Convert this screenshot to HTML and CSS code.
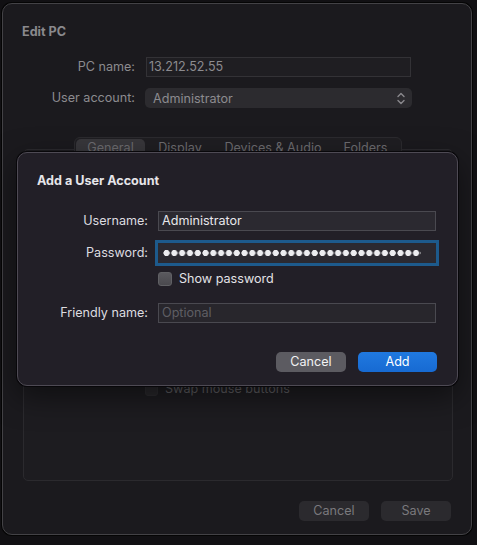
FILE: index.html
```html
<!DOCTYPE html>
<html lang="en">
<head>
<meta charset="utf-8">
<title>Edit PC</title>
<link rel="stylesheet" href="styles.css">
</head>
<body>
<div class="window">
  <div class="win-title">Edit PC</div>
  <div class="form">
    <label class="lbl">PC name:</label>
    <div class="field dim">13.212.52.55</div>
    <label class="lbl">User account:</label>
    <div class="popup">
      <span>Administrator</span>
      <svg class="chev" width="8" height="13" viewBox="0 0 8 13"><path d="M1 4.5 L4 1.5 L7 4.5 M1 8.5 L4 11.5 L7 8.5" fill="none" stroke="#8a898d" stroke-width="1.4" stroke-linecap="round" stroke-linejoin="round"/></svg>
    </div>
  </div>
  <div class="tabs">
    <div class="tab active">General</div>
    <div class="tab">Display</div>
    <div class="tab">Devices &amp; Audio</div>
    <div class="tab">Folders</div>
  </div>
  <div class="group">
    <div class="check-row">
      <span class="box dimbox"></span>
      <span class="dimtext">Swap mouse buttons</span>
    </div>
  </div>
  <div class="actions">
    <div class="btn dimbtn">Cancel</div>
    <div class="btn dimbtn">Save</div>
  </div>
</div>

<div class="sheet">
  <div class="sheet-title">Add a User Account</div>
  <div class="sheet-form">
    <label class="slbl">Username:</label>
    <div class="sfield">Administrator</div>
    <label class="slbl pw">Password:</label>
    <div class="sfield focus"><div class="dots"></div></div>
    <div></div>
    <div class="check-row show">
      <span class="box"></span>
      <span>Show password</span>
    </div>
    <label class="slbl friendly">Friendly name:</label>
    <div class="sfield placeholder friendly">Optional</div>
  </div>
  <div class="sheet-actions">
    <div class="btn cancel">Cancel</div>
    <div class="btn add">Add</div>
  </div>
</div>
</body>
</html>
```

FILE: styles.css
```css
html, body {
  margin: 0;
  padding: 0;
}
body {
  background: #111013;
  font-family: Inter, "Liberation Sans", sans-serif;
  font-size: 12.6px;
  width: 477px;
  height: 545px;
  position: relative;
  overflow: hidden;
  padding: 3px 0 0 2px;
  box-sizing: border-box;
}
.window {
  width: 470px;
  height: 532px;
  box-sizing: border-box;
  border: 1px solid #434246;
  border-radius: 10px;
  box-shadow: 0 0 0 1px #050505;
  background: #1b1a1e;
  display: flex;
  flex-direction: column;
  padding: 0 20px 0 19px;
}
.win-title {
  margin-top: 20px;
  line-height: 16px;
  font-weight: 700;
  color: #8a898d;
}
.form {
  margin-top: 17px;
  display: grid;
  grid-template-columns: 113px 265px;
  column-gap: 11px;
  row-gap: 11px;
  align-items: center;
}
.lbl {
  text-align: right;
  color: #8c8b8f;
  line-height: 20px;
}
.field.dim {
  height: 20px;
  box-sizing: border-box;
  border: 1px solid #333236;
  background: #1f1e22;
  color: #8c8b8f;
  padding-left: 2px;
  line-height: 18px;
}
.popup {
  height: 20px;
  margin-left: -1px;
  width: 267px;
  border-radius: 5px;
  background: #2c2b2f;
  color: #8c8b8f;
  display: flex;
  align-items: center;
  justify-content: space-between;
  padding: 0 7px 0 8px;
  box-sizing: border-box;
}
.tabs {
  margin: 29px 0 -10px 52px;
  width: 328px;
  height: 22px;
  display: flex;
  align-items: center;
  background: #1f1e22;
  border: 1px solid #2c2b2f;
  border-radius: 6px;
  box-sizing: border-box;
  position: relative;
  z-index: 1;
  padding: 1px;
  color: #6d6c70;
}
.tab {
  height: 18px;
  line-height: 18px;
  text-align: center;
  border-radius: 5px;
}
.tab:nth-child(1) { width: 69px; }
.tab:nth-child(2) { width: 70px; }
.tab:nth-child(3) { width: 116px; }
.tab:nth-child(4) { flex: 1; }
.tab.active {
  background: #38373b;
}
.group {
  margin-left: 1px;
  width: 430px;
  height: 332px;
  box-sizing: border-box;
  border: 1px solid #2b2a2e;
  border-radius: 5px;
  background: #1d1c20;
  padding: 231px 0 0 121px;
}
.check-row {
  display: flex;
  align-items: center;
  gap: 7px;
  line-height: 16px;
}
.box {
  width: 14px;
  height: 14px;
  border-radius: 3px;
  box-sizing: border-box;
  background: linear-gradient(#5a595e, #4a494e);
  border: 1px solid #606064;
}
.box.dimbox {
  width: 13px;
  height: 13px;
  background: #28272b;
  border-color: #2c2b2f;
}
.dimtext {
  color: #5c5b5f;
}
.actions {
  margin-top: 20px;
  display: flex;
  justify-content: flex-end;
  gap: 12px;
}
.btn {
  height: 20px;
  line-height: 20px;
  text-align: center;
  border-radius: 5px;
  box-sizing: border-box;
}
.dimbtn {
  width: 70px;
  background: #2b2a2e;
  color: #7a797d;
}

/* sheet overlay */
.sheet {
  position: absolute;
  z-index: 10;
  left: 17px;
  top: 152px;
  width: 441px;
  height: 234px;
  box-sizing: border-box;
  background: #221f27;
  border: 1px solid #4e4a54;
  border-radius: 10px;
  box-shadow: 0 0 0 1px #08070a, 0 10px 30px rgba(0,0,0,0.5);
  color: #e3e2e6;
  padding: 0 20px 0 19px;
}
.sheet-title {
  margin-top: 20px;
  line-height: 16px;
  font-weight: 700;
  color: #e6e5e9;
}
.sheet-form {
  margin-top: 22px;
  display: grid;
  grid-template-columns: 111px 278px;
  column-gap: 10px;
  align-items: center;
}
.slbl {
  text-align: right;
  line-height: 20px;
  color: #dddce0;
}
.sfield {
  height: 20px;
  box-sizing: border-box;
  border: 1px solid #4a4950;
  background: #2b2930;
  padding-left: 3px;
  line-height: 18px;
  color: #e8e7eb;
}
.sfield.focus {
  margin: 12px 0 0;
  border: 1px solid #2a2930;
  box-shadow: 0 0 0 3px #1d5a8c;
  background: #2b2930;
  display: flex;
  align-items: center;
  padding-left: 4px;
}
.slbl.pw {
  margin-top: 12px;
}
.dots {
  width: 258px;
  height: 8px;
  background-image: radial-gradient(circle at 3.5px 4px, #ececef 2.8px, transparent 3.4px);
  background-size: 7.8px 8px;
  background-repeat: repeat-x;
}
.check-row.show {
  margin-top: 8px;
  color: #e3e2e6;
}
.friendly {
  margin-top: 16px;
}
.sfield.placeholder {
  color: #5f5e64;
  background: #28262c;
}
.sheet-actions {
  margin-top: 29px;
  display: flex;
  justify-content: flex-end;
  gap: 12px;
}
.btn.cancel {
  width: 70px;
  background: #5c5b61;
  color: #f2f2f4;
}
.btn.add {
  width: 79px;
  background: linear-gradient(#2079e0, #176ad2);
  color: #ffffff;
}
```
